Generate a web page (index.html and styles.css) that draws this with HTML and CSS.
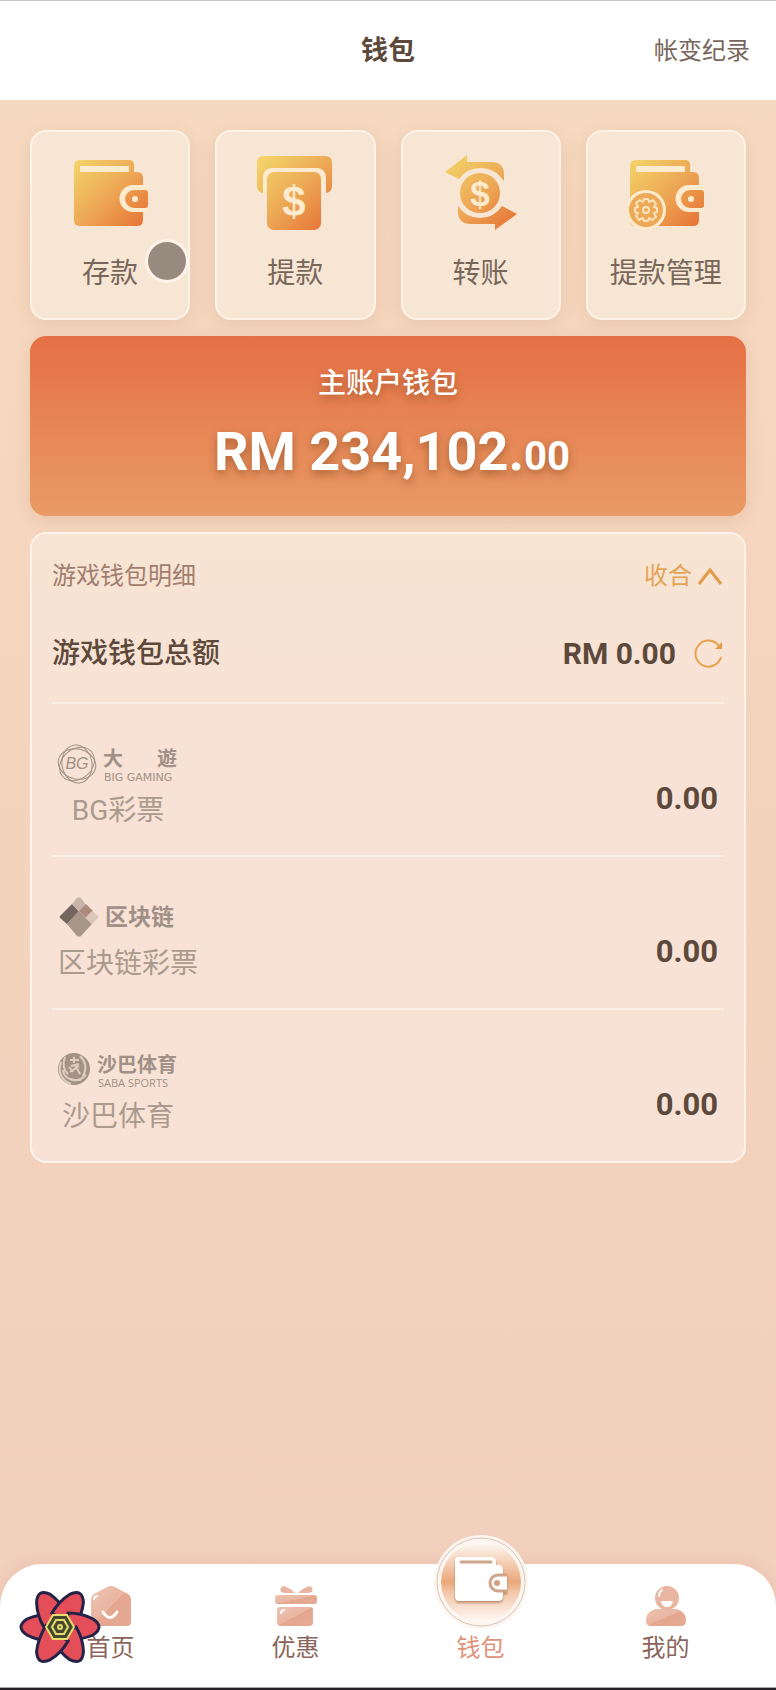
FILE: index.html
```html
<!DOCTYPE html>
<html lang="zh-CN">
<head>
<meta charset="utf-8">
<meta name="viewport" content="width=device-width, initial-scale=1">
<title>钱包</title>
<link rel="stylesheet" href="styles.css">
</head>
<body>
<svg class="defs" width="0" height="0" aria-hidden="true">
  <defs>
    <linearGradient id="gold" gradientUnits="userSpaceOnUse" x1="6" y1="8" x2="68" y2="72">
      <stop offset="0" stop-color="#f3d068"/><stop offset=".5" stop-color="#eda955"/><stop offset="1" stop-color="#e67638"/>
    </linearGradient>
    <linearGradient id="rose" x1="0" y1="0" x2="1" y2="1">
      <stop offset="0" stop-color="#edc3b2"/><stop offset=".5" stop-color="#e9b5a0"/><stop offset=".5" stop-color="#e4a68f"/><stop offset="1" stop-color="#e6aa95"/>
    </linearGradient>
    <linearGradient id="orb" x1="0" y1="0" x2="0" y2="1">
      <stop offset="0" stop-color="#fffaf5"/><stop offset=".5" stop-color="#eba77b"/><stop offset=".62" stop-color="#f2c5a5"/><stop offset="1" stop-color="#fffaf6"/>
    </linearGradient>
    <g id="wallet">
      <path fill="url(#gold)" d="M8 6H57Q62 6 62 11V18H65Q71 18 71 24V66Q71 72 65 72H8Q2 72 2 66V12Q2 6 8 6Z"/>
      <rect class="cut" x="8" y="12" width="49" height="6" rx="1"/>
      <path class="cut" d="M76 31H61A13 13 0 0 0 61 58H76Z"/>
      <path fill="url(#gold)" d="M62 36H73Q76 36 76 39V51Q76 54 73 54H62A9 9 0 0 1 62 36Z"/>
      <circle class="cut" cx="63" cy="45" r="3"/>
    </g>
  </defs>
</svg>

<header class="topbar">
  <h1 class="topbar-title">钱包</h1>
  <a class="topbar-link" href="#">帐变纪录</a>
</header>

<main class="content">
  <nav class="actions" aria-label="钱包操作">
    <a class="action" href="#">
      <svg class="action-icon" viewBox="0 0 76 76" aria-hidden="true"><use href="#wallet"/></svg>
      <span>存款</span>
    </a>
    <a class="action" href="#">
      <svg class="action-icon" viewBox="0 0 76 76" aria-hidden="true">
        <path fill="url(#gold)" d="M7 2H68Q75 2 75 9V32Q75 38 69 39V24Q69 14 59 14H16Q6 14 6 24V39Q0 38 0 32V9Q0 2 7 2Z"/>
        <path class="cut-line" d="M8 38V24Q8 16 16 16H58Q66 16 66 24V38"/>
        <rect fill="url(#gold)" x="10" y="18" width="54" height="58" rx="7"/>
        <text class="dollar dollar-lg" x="37" y="62">$</text>
      </svg>
      <span>提款</span>
    </a>
    <a class="action" href="#">
      <svg class="action-icon" viewBox="0 0 76 76" aria-hidden="true">
        <path fill="url(#gold)" d="M2 18 24 1V8H48Q61 8 61 21V27Q52 14 37 14 24 14 16 25Z"/>
        <path fill="url(#gold)" d="M74 60 52 76V70H28Q15 70 15 57V52Q23 64 37 64 51 64 59 52Z"/>
        <circle fill="url(#gold)" cx="37" cy="39" r="20"/>
        <text class="dollar dollar-sm" x="37" y="52">$</text>
      </svg>
      <span>转账</span>
    </a>
    <a class="action" href="#">
      <svg class="action-icon" viewBox="0 0 76 76" aria-hidden="true">
        <use href="#wallet"/>
        <circle class="cut" cx="18" cy="56" r="20"/>
        <circle cx="18" cy="56" r="17" fill="#eda955"/>
        <g class="gear"><path d="M16 45h4l1 3 4-2 3 4-2 3 3 1v4l-3 1 2 4-4 3-3-2-1 3h-4l-1-3-4 2-3-4 2-3-3-1v-4l3-1-2-4 4-3 3 2Z"/><circle cx="18" cy="56" r="3"/></g>
      </svg>
      <span>提款管理</span>
    </a>
  </nav>

  <section class="balance">
    <h2 class="balance-title">主账户钱包</h2>
    <p class="balance-amount">RM 234,102.<small class="balance-cents">00</small></p>
  </section>

  <section class="details">
    <div class="details-head">
      <h2 class="details-title">游戏钱包明细</h2>
      <button class="collapse" type="button">收合
        <svg width="26" height="24" viewBox="0 0 26 24" aria-hidden="true"><path d="M1 20 12 6 23 20"/></svg>
      </button>
    </div>
    <div class="total">
      <span class="total-label">游戏钱包总额</span>
      <span class="total-value">RM 0.00</span>
      <button class="refresh" type="button" aria-label="刷新">
        <svg width="32" height="32" viewBox="0 0 32 32" aria-hidden="true"><path d="M27 8A13 13 0 1 0 29 19"/><path class="refresh-head" d="M30 4V11H23Z"/></svg>
      </button>
    </div>
    <ul class="games">
      <li class="game">
        <div class="game-brand">
          <svg class="game-logo" viewBox="0 0 120 40" aria-hidden="true">
            <g class="rings"><ellipse cx="19" cy="20" rx="19" ry="15" transform="rotate(-40 19 20)"/><ellipse cx="19" cy="20" rx="19" ry="15" transform="rotate(15 19 20)"/><ellipse cx="19" cy="20" rx="19" ry="15" transform="rotate(80 19 20)"/></g>
            <text class="logo-bg" x="19" y="25">BG</text>
            <text class="logo-cjk" x="45" y="22">大</text><text class="logo-cjk" x="99" y="22">遊</text>
            <text class="logo-latin" x="46" y="37">BIG GAMING</text>
          </svg>
          <span class="game-name">BG彩票</span>
        </div>
        <span class="game-value">0.00</span>
      </li>
      <li class="game">
        <div class="game-brand">
          <svg class="game-logo" viewBox="0 0 120 40" aria-hidden="true">
            <path fill="#a89689" d="M9 27 21 14 34 27 23 39Q21 40 19 39Z"/>
            <path fill="#74665f" d="M14 7 21 14 9 27 2 21Q1 20 2 19Z"/>
            <path fill="#c8b5aa" d="M19 1Q21 0 23 1L28 8 21 15 14 7Z"/>
            <path fill="#ab8b7c" d="M28 7 35 14 28 21 21 14Z"/>
            <path fill="#dac6ba" d="M34 14 40 19Q41 20 40 21L34 27 27 21Z"/>
            <text class="logo-cjk logo-cjk-lg" x="47" y="28">区块链</text>
          </svg>
          <span class="game-name">区块链彩票</span>
        </div>
        <span class="game-value">0.00</span>
      </li>
      <li class="game">
        <div class="game-brand">
          <svg class="game-logo" viewBox="0 0 120 40" aria-hidden="true">
            <circle cx="16" cy="19" r="16" fill="#a39387"/>
            <g class="globe"><path d="M3 12Q-2 28 13 34M5 20Q6 31 23 30M7 7Q3 18 10 24M22 6Q31 15 25 26M12 29Q20 33 28 25"/><path d="M12 10h9M16 7v6M13 16l8-2M12 22l9-6M17 15l5 9M11 17l4 5"/></g>
            <text class="logo-cjk" x="39" y="22">沙巴体育</text>
            <text class="logo-latin logo-saba" x="40" y="37">SABA SPORTS</text>
          </svg>
          <span class="game-name">沙巴体育</span>
        </div>
        <span class="game-value">0.00</span>
      </li>
    </ul>
  </section>
</main>

<nav class="tabbar" aria-label="主导航">
  <a class="tab" href="#">
    <svg class="tab-icon" viewBox="0 0 44 44" aria-hidden="true"><path fill="url(#rose)" d="M18 3Q22 1 26 3L39 10Q42 12 42 15V38Q42 42 38 42H6Q2 42 2 38V15Q2 12 5 10Z"/><path class="shine" d="M5 15Q5 13 8 12"/><path class="smile" d="M14 28Q21 39 28 28"/></svg>
    <span>首页</span>
  </a>
  <a class="tab" href="#">
    <svg class="tab-icon" viewBox="0 0 44 44" aria-hidden="true"><path fill="#e9b5a0" d="M7 8Q5 3 10 2 16 4 21 9H11ZM38 8Q40 3 35 2 29 4 24 9H34Z"/><rect fill="url(#rose)" x="1" y="11" width="42" height="9" rx="3"/><path fill="url(#rose)" d="M3 26Q3 23 6 23H36Q39 23 39 26V38Q39 42 35 42H7Q3 42 3 38Z"/><path class="shine" d="M7 29Q7 27 10 26"/></svg>
    <span>优惠</span>
  </a>
  <a class="tab tab-active" href="#" aria-current="page">
    <span class="tab-icon">
      <svg class="orb" viewBox="0 0 96 96" aria-hidden="true">
        <circle cx="48" cy="48" r="47" fill="#fdf6f0"/>
        <circle class="orb-ring" cx="48" cy="48" r="44"/>
        <circle cx="48" cy="48" r="40" fill="url(#orb)"/>
        <g class="orb-wallet">
          <path class="paper" d="M26 23H58Q63 23 63 28V31H65Q70 31 70 36V62Q70 67 65 67H26Q22 67 22 62V27Q22 23 26 23Z"/>
          <path class="orb-line orb-slot" d="M28 28H58"/>
          <path class="paper" d="M74 41H65A8 8 0 0 0 65 57H74Z"/>
          <path class="orb-line" d="M74 41H65A8 8 0 0 0 65 57H74"/>
          <circle cx="64" cy="49" r="3" fill="#d59e7c"/>
        </g>
      </svg>
    </span>
    <span>钱包</span>
  </a>
  <a class="tab" href="#">
    <svg class="tab-icon" viewBox="0 0 44 44" aria-hidden="true"><path fill="url(#rose)" d="M11 25H33Q42 28 42 37 42 42 37 42H7Q2 42 2 37 2 28 11 25Z"/><circle cx="23" cy="14" r="12" fill="#e9b5a0"/><path class="shine" d="M15 12Q15 8 18 6"/><path fill="#fff" d="M17 17H29Q28 23 23 23T17 17Z"/></svg>
    <span>我的</span>
  </a>
</nav>

<button class="devtools" type="button" aria-label="开发工具">
  <svg width="82" height="76" viewBox="-41 -38 82 76" aria-hidden="true">
    <g class="petals">
      <path id="petal" d="M-8 14Q-22 14-33 8-39 4-39 0-39-4-33-8-22-13-6-13Z"/>
      <use href="#petal" transform="rotate(60)"/>
      <use href="#petal" transform="rotate(120)"/>
      <use href="#petal" transform="rotate(180)"/>
      <use href="#petal" transform="rotate(240)"/>
      <use href="#petal" transform="rotate(300)"/>
    </g>
    <path class="hex" d="M-14 0-7-12H7L14 0 7 12H-7Z"/>
    <path class="hex" d="M-8 0-4-7H4L8 0 4 7H-4Z"/>
    <circle r="3" fill="#e6dc6c"/>
    <circle r="1" fill="#45482f"/>
  </svg>
</button>
<span class="touch" aria-hidden="true"></span>
</body>
</html>
```
FILE: styles.css
```css
* { box-sizing: border-box; }

body {
  margin: 0;
  min-height: 100vh;
  display: flex;
  flex-direction: column;
  position: relative;
  font-family: Roboto, "Noto Sans CJK SC", sans-serif;
  color: #5d493b;
  background: linear-gradient(#f6dac0 100px, #f5d4bd 700px, #f1cfbd);
  border-bottom: 2px solid #242024;
}

h1, h2, p, ul { margin: 0; padding: 0; }
a { color: inherit; text-decoration: none; }
button { border: 0; padding: 0; background: none; font: inherit; color: inherit; }
.defs { position: absolute; }

.topbar {
  display: grid;
  grid-template-columns: 1fr auto 1fr;
  align-items: center;
  height: 100px;
  padding: 0 26px;
  background: #fff;
  border-top: 1px solid #c9c9c9;
}
.topbar-title { grid-column: 2; font-size: 27px; font-weight: 700; line-height: 40px; }
.topbar-link { justify-self: end; font-size: 24px; line-height: 32px; color: #77665b; }

.content {
  display: flex;
  flex-direction: column;
  gap: 16px;
  padding: 30px;
}

.actions { display: grid; grid-template-columns: repeat(4, 1fr); gap: 25px; }
.action {
  display: flex;
  flex-direction: column;
  align-items: center;
  gap: 24px;
  height: 190px;
  padding-top: 22px;
  border: 2px solid #fdf3e6;
  border-radius: 16px;
  background: #f8e6d4;
  box-shadow: 0 4px 20px rgba(190, 130, 100, .22);
  font-size: 28px;
  line-height: 40px;
  white-space: nowrap;
  color: #77665a;
}
.action-icon { width: 76px; height: 76px; }
.cut { fill: #fdebd0; }
.cut-line { fill: none; stroke: #fdebd0; stroke-width: 4; }
.dollar { fill: #fdebd0; font-family: "Liberation Sans", sans-serif; font-weight: 700; text-anchor: middle; }
.dollar-lg { font-size: 42px; }
.dollar-sm { font-size: 35px; }
.gear { fill: none; stroke: #fbe3c0; stroke-width: 2; stroke-linejoin: round; }

.balance {
  display: flex;
  flex-direction: column;
  align-items: center;
  height: 180px;
  padding-top: 28px;
  border-radius: 16px;
  color: #fff;
  background: linear-gradient(#e57045, #e99b65);
  box-shadow: 0 4px 16px rgba(190, 130, 100, .22);
  text-shadow: 0 4px 8px rgba(120, 60, 20, .5);
}
.balance-title { font-size: 28px; font-weight: 500; line-height: 40px; }
.balance-amount { margin-top: 16px; padding-left: 8px; font-size: 54px; font-weight: 700; line-height: 64px; }
.balance-cents { font-size: 40px; }

.details {
  padding: 26px 20px 0;
  border: 2px solid #fdf3e9;
  border-radius: 16px;
  background: linear-gradient(#f7e4d2, #f8e2d5 200px);
}
.details-head { display: flex; justify-content: space-between; line-height: 32px; font-size: 24px; }
.details-title { font-size: 24px; font-weight: 400; color: #a17d70; }
.collapse { display: flex; align-items: center; gap: 6px; color: #e3a356; }
.collapse svg { fill: none; stroke: #df9c4b; stroke-width: 3; }

.total {
  display: flex;
  align-items: center;
  margin-top: 42px;
  padding-bottom: 28px;
  border-bottom: 2px solid #fcefe5;
  line-height: 40px;
}
.total-label { flex: 1; font-size: 28px; font-weight: 500; }
.total-value { font-size: 30px; font-weight: 700; }
.refresh { margin-left: 16px; height: 32px; }
.refresh svg { display: block; fill: none; stroke: #e8a24c; stroke-width: 2; }
.refresh .refresh-head { fill: #e39b48; stroke: none; }

.games { list-style: none; }
.game {
  display: flex;
  justify-content: space-between;
  align-items: flex-end;
  padding: 40px 6px 24px;
  line-height: 40px;
}
.game + .game { border-top: 2px solid #fcefe5; }
.game-brand { display: flex; flex-direction: column; gap: 7px; min-width: 120px; }
.game-logo { width: 120px; height: 40px; overflow: visible; }
.game-name { text-align: center; font-size: 28px; color: #ab9a8e; }
.game-value { padding-bottom: 12px; font-size: 31px; font-weight: 700; }

.game-logo text { fill: #a09085; }
.rings, .globe { fill: none; stroke: #a09085; stroke-width: 1; }
.globe { stroke: #dfcdc0; stroke-width: 2; }
.game-logo .logo-bg { font: italic 16px "Liberation Sans", sans-serif; text-anchor: middle; }
.logo-cjk { font: 700 20px "Noto Sans CJK SC", sans-serif; }
.logo-cjk-lg { font-size: 23px; }
.logo-latin { font: 11px "DejaVu Sans", sans-serif; }
.logo-saba { font: 11px "Open Sans", sans-serif; }

.tabbar {
  display: flex;
  margin-top: auto;
  height: 124px;
  padding: 20px 18px 0;
  border-radius: 42px 42px 0 0;
  border-bottom: 1px solid #aaa;
  background: #fff;
  box-shadow: 0 -2px 14px rgba(190, 120, 90, .16);
}
.tab {
  flex: 1;
  display: flex;
  flex-direction: column;
  align-items: center;
  gap: 4px;
  font-size: 24px;
  line-height: 32px;
  color: #8b655b;
}
.tab-icon { position: relative; width: 44px; height: 44px; }
.tab-active { color: #e0937a; }
.orb { position: absolute; left: 50%; bottom: -2px; width: 96px; height: 96px; transform: translateX(-50%); }
.orb-ring { fill: none; stroke: #d8c4b6; stroke-width: 1; }
.orb-wallet { filter: drop-shadow(0 2px 1px rgba(150, 90, 50, .55)); }
.paper { fill: #fff; }
.orb-line { fill: none; stroke: #cfa58b; stroke-width: 3; }
.orb-slot { stroke-linecap: round; }
.shine, .smile { fill: none; stroke: #fff; stroke-width: 2; stroke-linecap: round; }
.smile { stroke-width: 3; }

.devtools { position: fixed; left: 19px; bottom: 25px; height: 76px; }
.devtools svg { display: block; overflow: visible; }
.petals { fill: #e34e58; stroke: #252247; stroke-width: 3; }
.hex { stroke: #e6dc6c; stroke-width: 2; fill: #45482f; }

.touch {
  position: absolute;
  left: 148px;
  top: 242px;
  width: 38px;
  height: 38px;
  border-radius: 50%;
  background: #978a7f;
  box-shadow: 0 0 0 3px rgba(255, 245, 238, .8);
}
```
